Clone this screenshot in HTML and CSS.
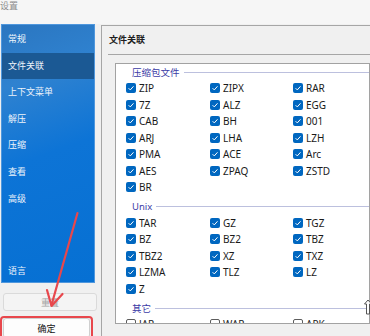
FILE: index.html
```html
<!DOCTYPE html>
<html lang="zh-CN">
<head>
    <meta charset="UTF-8">
    <meta name="viewport" content="width=device-width, initial-scale=1.0">
    <title>设置</title>
    <link rel="stylesheet" href="styles.css">
</head>
<body>
    <div class="window">
        <div class="titlebar">设置</div>

        <div class="main">
            <div class="left">
                <nav class="sidebar">
                    <div class="nav-item">常规</div>
                    <div class="nav-item active">文件关联</div>
                    <div class="nav-item">上下文菜单</div>
                    <div class="nav-item">解压</div>
                    <div class="nav-item">压缩</div>
                    <div class="nav-item">查看</div>
                    <div class="nav-item">高级</div>
                    <div class="nav-item nav-bottom">语言</div>
                </nav>
                <button class="btn btn-reset">重置</button>
                <button class="btn btn-ok">确定</button>
            </div>

            <section class="panel">
                <h2 class="panel-title">文件关联</h2>
                <div class="panel-sep"></div>
                <div class="list-box" id="list-box"></div>
            </section>
        </div>

        <!-- annotation drawn over the screenshot -->
        <div class="mark-box"></div>
        <svg class="mark-arrow" width="370" height="336" viewBox="0 0 370 336">
            <line x1="77.5" y1="213" x2="51.5" y2="305" />
            <polyline points="47,290 51.5,306 62.5,294" />
        </svg>
        <svg class="scroll-glyph" width="8" height="16" viewBox="0 0 8 16">
            <path d="M4 1 L7.5 5 L5.5 5 L5.5 15 L2.5 15 L2.5 5 L0.5 5 Z" />
        </svg>
    </div>

    <script>
        // File type groups shown in the association list
        const GROUPS = [
            {
                title: '压缩包文件',
                checked: true,
                items: ['ZIP', 'ZIPX', 'RAR', '7Z', 'ALZ', 'EGG', 'CAB', 'BH', '001',
                        'ARJ', 'LHA', 'LZH', 'PMA', 'ACE', 'Arc', 'AES', 'ZPAQ', 'ZSTD', 'BR']
            },
            {
                title: 'Unix',
                checked: true,
                items: ['TAR', 'GZ', 'TGZ', 'BZ', 'BZ2', 'TBZ', 'TBZ2', 'XZ', 'TXZ',
                        'LZMA', 'TLZ', 'LZ', 'Z']
            },
            {
                title: '其它',
                checked: false,
                items: ['JAR', 'WAR', 'APK', 'IPA', 'XPI', 'DEB']
            }
        ];

        const CHECK = '<svg width="10" height="10" viewBox="0 0 10 10">' +
            '<path d="M2.6 5.2 L4.3 6.9 L7.5 3.3" fill="none" stroke="#fff" stroke-width="1" /></svg>';

        const listBox = document.getElementById('list-box');

        GROUPS.forEach(group => {
            const groupDiv = document.createElement('div');
            groupDiv.className = 'group';

            const rows = group.items.map(name => `
                <label class="check">
                    <span class="box ${group.checked ? 'on' : ''}">${group.checked ? CHECK : ''}</span>
                    <span class="check-label">${name}</span>
                </label>
            `).join('');

            groupDiv.innerHTML = `
                <div class="legend"><span>${group.title}</span></div>
                <div class="grid">${rows}</div>
            `;
            listBox.appendChild(groupDiv);
        });
    </script>
</body>
</html>
```

FILE: styles.css
```css
:root {
    --window-bg: #f0f0f0;
    --line-color: #a6a6a6;
    --legend-color: #3b3ba6;
    --legend-line: #bcc0de;
    --check-blue: #0067c0;
    --mark-red: #e8474c;
}

* {
    margin: 0;
    padding: 0;
    box-sizing: border-box;
}

body {
    font-family: 'Noto Sans', 'Noto Sans CJK SC', sans-serif;
    background-color: var(--window-bg);
    color: #1a1a1a;
}

.window {
    position: relative;
    width: 370px;
    height: 336px;
    overflow: hidden;
    background-color: var(--window-bg);
}

.titlebar {
    height: 24px;
    font-size: 9px;
    line-height: 11px;
    color: #8c8c8c;
    background-color: #f6f6f6;
}

.main {
    display: flex;
    align-items: flex-start;
}

/* left column: navigation + buttons */
.left {
    width: 97px;
    margin-left: 1px;
    display: flex;
    flex-direction: column;
}

.sidebar {
    width: 94px;
    height: 259px;
    padding-top: 1px;
    display: flex;
    flex-direction: column;
    border: 1px solid #4f97dd;
    background: linear-gradient(160deg, #2b76c0 0%, #2f82d0 22%, #0d74d6 50%, #0670d3 100%);
}

.nav-item {
    height: 26.6px;
    line-height: 26.6px;
    padding-left: 6px;
    font-size: 9px;
    color: #eef4fb;
}

.nav-item.active {
    background-color: #1b5994;
}

.nav-bottom {
    margin-top: auto;
    height: 22px;
    line-height: 22px;
}

.btn {
    font-family: inherit;
    font-size: 9px;
    border-radius: 3px;
    margin-left: 2px;
}

.btn-reset {
    width: 94px;
    height: 18px;
    margin-top: 10px;
    background-color: #f4f4f4;
    border: 1px solid #dadada;
    color: #a3a3a3;
}

.btn-ok {
    width: 87px;
    height: 20px;
    margin-top: 7px;
    background-color: #fdfdfd;
    border: 1px solid #cfcfcf;
    color: #111;
}

/* right panel */
.panel {
    width: 300px;
    height: 330px;
    margin-left: 4px;
    margin-top: 1px;
    border-top: 1px solid var(--line-color);
    border-left: 1px solid var(--line-color);
    background-color: var(--window-bg);
}

.panel-title {
    height: 28px;
    line-height: 28px;
    padding-left: 7px;
    font-size: 9px;
    font-weight: bold;
    color: #1e1e1e;
}

.panel-sep {
    height: 1px;
    margin-left: 6px;
    background-color: var(--line-color);
}

.list-box {
    height: 261px;
    margin: 8px 0 0 13px;
    padding-left: 10px;
    border: 1px solid #a2a2a2;
    background-color: #ffffff;
    overflow: hidden;
}

.group + .group {
    margin-top: 3px;
}

.legend {
    display: flex;
    align-items: center;
    height: 16px;
    padding-left: 6px;
    font-size: 9.5px;
    color: var(--legend-color);
}

.legend::after {
    content: '';
    flex: 1;
    height: 1px;
    margin-left: 4px;
    background-color: var(--legend-line);
}

.grid {
    display: grid;
    grid-template-columns: 84px 83px 1fr;
}

.check {
    display: flex;
    align-items: center;
    gap: 3px;
    height: 16.5px;
    font-size: 10px;
}

.box {
    width: 10px;
    height: 10px;
    border-radius: 2px;
    border: 1px solid #5c5c5c;
    background-color: #fff;
    display: flex;
}

.box.on {
    border: none;
    background-color: var(--check-blue);
}

/* annotation overlays */
.mark-box {
    position: absolute;
    left: 0;
    top: 316px;
    width: 93px;
    height: 30px;
    border: 2px solid var(--mark-red);
    border-radius: 4px;
}

.mark-arrow {
    position: absolute;
    left: 0;
    top: 0;
    fill: none;
    stroke: var(--mark-red);
    stroke-width: 2.2;
    stroke-linecap: round;
    stroke-linejoin: round;
}

.scroll-glyph {
    position: absolute;
    left: 364px;
    top: 299px;
    fill: #fff;
    stroke: #555;
    stroke-width: 1;
}
```
